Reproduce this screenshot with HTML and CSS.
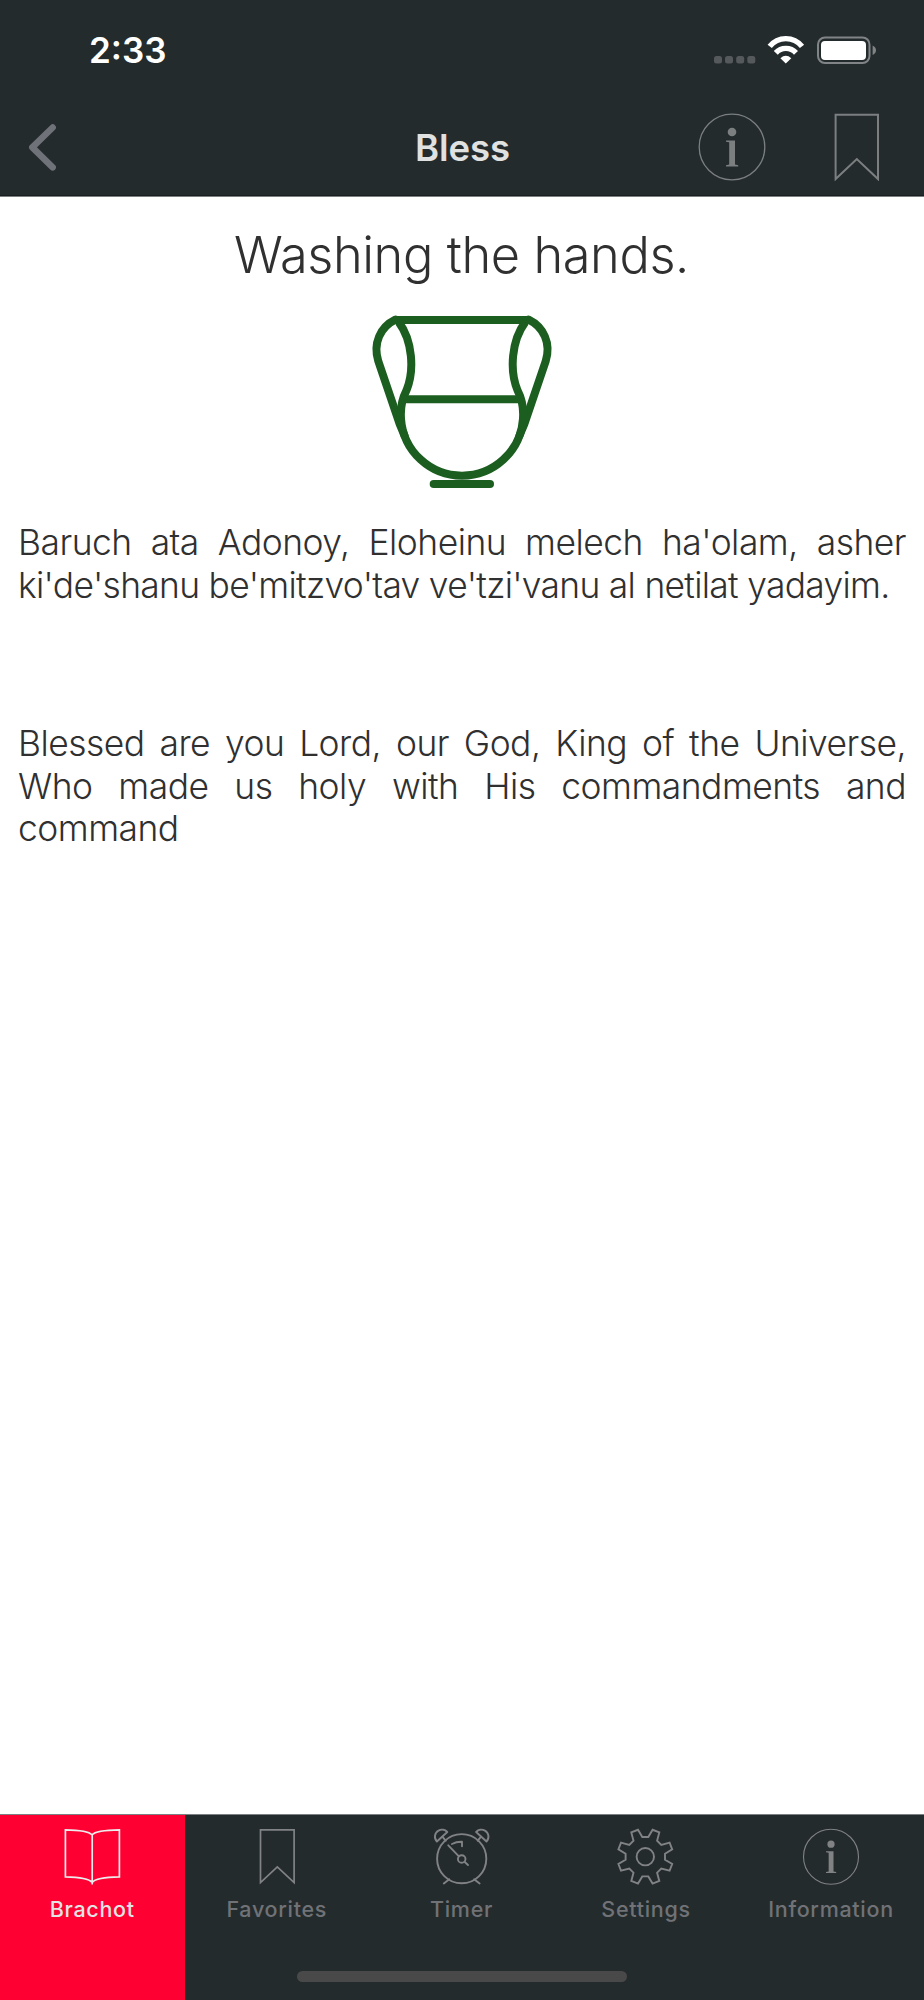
FILE: index.html
```html
<!DOCTYPE html>
<html lang="en">
<head>
<meta charset="utf-8">
<title>Bless</title>
<link rel="stylesheet" href="styles.css">
</head>
<body>
<svg class="defs" width="0" height="0" aria-hidden="true">
  <symbol id="info" viewBox="-34 -34 68 68">
    <circle r="32.8" fill="none" stroke="currentColor" stroke-width="1.3"/>
    <circle cy="-15" r="4.3" fill="currentColor"/>
    <path d="M-6 -6.5H3V17.6L6.2 18.2V19.5H-6V18.2L-2.8 17.6V-4.8L-6 -5.2Z" fill="currentColor"/>
  </symbol>
</svg>
<div class="screen">
  <header class="header">
    <div class="status">
      <span class="clock">2:33</span>
      <svg class="status-icons" width="166" height="32" viewBox="712 34 166 32">
        <g fill="#55595b"><rect x="714" y="56" width="8" height="7.5" rx="2.5"/><rect x="725" y="56" width="8" height="7.5" rx="2.5"/><rect x="736.2" y="56" width="8" height="7.5" rx="2.5"/><rect x="747.3" y="56" width="8" height="7.5" rx="2.5"/></g>
        <g fill="none" stroke="#fff" stroke-width="5.4"><path d="M769.7 46.4A20.6 20.6 0 0 1 802 46.4"/><path d="M775.8 52.9A13.6 13.6 0 0 1 796 52.9"/></g>
        <path d="M780.4 58.3Q785.8 53.4 791.3 58.3L785.8 63.5Z" fill="#fff"/>
        <rect x="818" y="37.500" width="51.500" height="25.500" rx="7" fill="none" stroke="#808486" stroke-width="2"/>
        <rect x="821" y="41" width="45" height="19" rx="4" fill="#fff"/>
        <path d="M872.6 45.500Q876 47.200 876 50.300T872.600 55Z" fill="#808486"/>
      </svg>
    </div>
    <nav class="navbar">
      <svg class="back" width="32" height="52" viewBox="26 121.300 32 52"><path d="M52.700 127.800L32.300 147.700L52.700 167.700" fill="none" stroke="#6f7379" stroke-width="6.400" stroke-linecap="round" stroke-linejoin="round"/></svg>
      <h1 class="nav-title">Bless</h1>
      <div class="actions">
        <svg width="68" height="68"><use href="#info"/></svg>
        <svg width="46" height="68" viewBox="-0.300 -0.600 46 68"><path d="M1.300 1.200H43.700V65.500L22.500 45.500L1.300 65.500Z" fill="none" stroke="currentColor" stroke-width="2"/></svg>
      </div>
    </nav>
  </header>

  <main class="content">
    <h2 class="title">Washing the hands.</h2>
    <svg class="cup" width="200" height="200" viewBox="0 0 600 600" fill="none" stroke="#1b5e20" stroke-width="24">
      <path d="M104 60H508"/>
      <path d="M106 59C61 81 38 130 55 184L119 372L134 408" stroke-linecap="round"/>
      <path d="M506 59C551 81 574 130 557 184L493 372L478 408" stroke-linecap="round"/>
      <path d="M116 66C158 122 164 212 139 272C123 303 121 326 123 356C130 455 212 527 306 527C400 527 482 455 489 356C491 326 489 303 473 272C448 212 454 122 496 66"/>
      <path d="M132 298H480"/>
      <path d="M221 552H390" stroke-linecap="round"/>
    </svg>
    <p class="verse">
      <span class="line full">Baruch ata Adonoy, Eloheinu melech ha'olam, asher</span>
      <span class="line tight">ki'de'shanu be'mitzvo'tav ve'tzi'vanu al netilat yadayim.</span>
    </p>
    <p class="verse translation">
      <span class="line full">Blessed are you Lord, our God, King of the Universe,</span>
      <span class="line full">Who made us holy with His commandments and</span>
      <span class="line">command</span>
    </p>
  </main>

  <footer class="tabs">
    <a class="tab active">
      <svg width="60" height="60" fill="none" stroke="currentColor" stroke-width="1.700"><path d="M30 7.800C27 4.300 16 3 3.400 2.800V49.800C16 50 27 51.500 30.200 55.400C33 51.500 44 50 57.400 49.800V2.800C44 3 33 4.300 30 7.800ZM30.200 7.800V57.500"/></svg>
      <span>Brachot</span>
    </a>
    <a class="tab">
      <svg width="60" height="60" viewBox="-0.200 0 60 60" fill="none" stroke="currentColor" stroke-width="1.700"><path d="M13.300 2.800H46.900V55.500L30.100 39.800L13.300 55.500Z"/></svg>
      <span>Favorites</span>
    </a>
    <a class="tab">
      <svg width="60" height="60" fill="none" stroke="currentColor" stroke-width="1.900" stroke-linecap="round" stroke-linejoin="round"><circle cx="29.700" cy="31.700" r="24.600"/><circle cx="29.700" cy="32" r="3.800"/><path d="M16.300 18.300L26.900 29.300M32.500 34.800L36 38M20 17Q24.500 14.500 30 14.700V19.300M17.300 52.300L11.800 56.500M42.100 52.300L47.600 56.500M10.300 9.700L13.700 13.700M49.100 9.700L45.700 13.700"/><path d="M4.900 14.500C1.700 11.300 2.500 5.800 6.500 3.600C9.300 2 13 2.600 15.300 5ZM54.500 14.500C57.700 11.300 56.900 5.800 52.900 3.600C50.100 2 46.400 2.600 44.100 5Z"/></svg>
      <span>Timer</span>
    </a>
    <a class="tab">
      <svg width="60" height="60" viewBox="-29.300 -29.700 60 60" fill="none" stroke="currentColor" stroke-width="1.900"><circle r="8.700"/><path d="M-3 -19.700L3 -19.700L7.300 -26.900L14 -24.300L11.800 -16L16 -11.800L24.300 -14L26.900 -7.300L19.700 -3L19.700 3L26.900 7.300L24.300 14L16 11.800L11.800 16L14 24.300L7.300 26.900L3 19.700L-3 19.700L-7.300 26.900L-14 24.300L-11.800 16L-16 11.800L-24.300 14L-26.900 7.300L-19.700 3L-19.700 -3L-26.900 -7.300L-24.300 -14L-16 -11.800L-11.800 -16L-14 -24.300L-7.300 -26.900Z"/></svg>
      <span>Settings</span>
    </a>
    <a class="tab">
      <svg width="60" height="60" viewBox="0 0 60 60"><use href="#info" x="1.500" y="1.200" width="57" height="57"/></svg>
      <span>Information</span>
    </a>
    <div class="home-indicator"></div>
  </footer>
</div>
</body>
</html>
```
FILE: styles.css
```css
* { box-sizing: border-box; margin: 0; padding: 0; }
body { background: #fff; font-family: Inter, "Liberation Sans", sans-serif; color: #303030; }
.defs { position: absolute; }
.screen { width: 924px; height: 2000px; display: flex; flex-direction: column; }

.header { height: 197px; flex: none; background: #242b2d; border-bottom: 1px solid #7c8082; box-shadow: inset 0 -1px #191e20; }
.status { height: 100px; display: flex; justify-content: space-between; align-items: center; padding: 0 46px 0 89px; }
.clock { color: #fff; font-size: 35px; font-weight: 600; line-height: 42px; }
.navbar { height: 94px; display: grid; grid-template-columns: minmax(0, 1fr) auto minmax(0, 1fr); align-items: center; padding: 0 26px; }
.nav-title { color: #e0e1e1; font-size: 36.500px; font-weight: 600; line-height: 44px; letter-spacing: -0.100px; padding: 2px 0 0 1px; }
.actions { justify-self: end; display: flex; gap: 68px; margin-right: 18px; color: #7b7f80; }

.content { flex: 1; display: flex; flex-direction: column; padding: 28px 18px 0; }
.title { font-size: 50.500px; font-weight: 300; line-height: 60px; letter-spacing: -0.400px; text-align: center; padding-right: 1px; }
.cup { align-self: center; margin: 15px 4px 0 0; }
.verse { font-size: 35.400px; font-weight: 300; line-height: 42.500px; letter-spacing: -0.500px; margin-top: 22px; }
.translation { margin-top: 116px; }
.line { display: block; white-space: nowrap; }
.full { text-align-last: justify; }
.tight { letter-spacing: -0.690px; }

.tabs { position: relative; height: 186px; flex: none; display: grid; grid-template-columns: 184.500px 184.500px 185px 184px 186px; background: #242b2d; border-top: 1px solid #7c8082; }
.tab { display: flex; flex-direction: column; align-items: center; padding-top: 12px; color: #808284; }
.tab span { font-size: 21.500px; font-weight: 500; line-height: 26px; margin-top: 9px; letter-spacing: 0.700px; color: #707276; }
.tab.active { background: #ff0033; color: #ececec; }
.tab.active span { color: #e4e4e4; }
.home-indicator { position: absolute; left: 297px; bottom: 18px; width: 330px; height: 11px; border-radius: 6px; background: #494949; }
```
